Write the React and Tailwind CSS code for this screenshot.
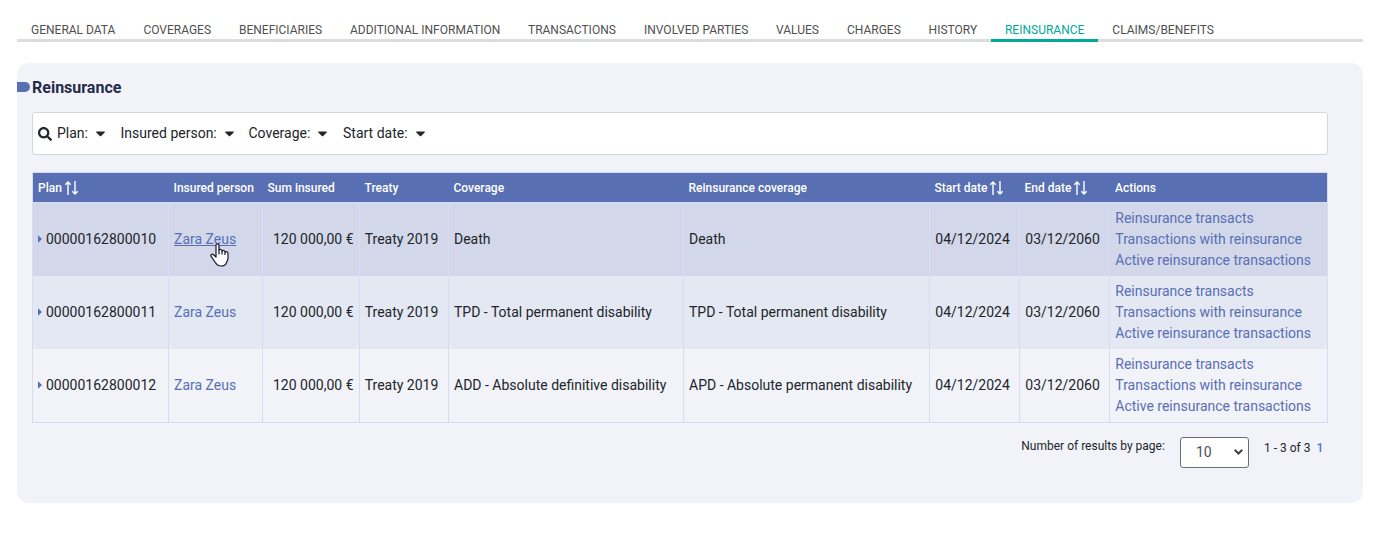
import React from "react";

const TABS = [
  { label: "GENERAL DATA", width: "w-[112.4px]" },
  { label: "COVERAGES", width: "w-[95.6px]" },
  { label: "BENEFICIARIES", width: "w-[111px]" },
  { label: "ADDITIONAL INFORMATION", width: "w-[178px]" },
  { label: "TRANSACTIONS", width: "w-[116px]" },
  { label: "INVOLVED PARTIES", width: "w-[132px]" },
  { label: "VALUES", width: "w-[71px]" },
  { label: "CHARGES", width: "w-[81.600px]" },
  { label: "HISTORY", width: "w-[76.4px]" },
  { label: "REINSURANCE", width: "w-[107.4px]", active: true },
  { label: "CLAIMS/BENEFITS", width: "w-[130px]" },
];

const FILTERS = [
  { label: "Plan:", width: "w-[63.5px]" },
  { label: "Insured person:", width: "w-[128px]" },
  { label: "Coverage:", width: "w-[94.5px]" },
  { label: "Start date:", width: "w-[97px]" },
];

const COLUMNS = [
  { label: "Plan", sortable: true },
  { label: "Insured person" },
  { label: "Sum insured" },
  { label: "Treaty" },
  { label: "Coverage" },
  { label: "Reinsurance coverage" },
  { label: "Start date", sortable: true },
  { label: "End date", sortable: true },
  { label: "Actions" },
];

const ROWS = [
  { plan: "00000162800010", coverage: "Death", reinsurance: "Death", bg: "bg-[#d2d8ea]", hovered: true },
  {
    plan: "00000162800011",
    coverage: "TPD - Total permanent disability",
    reinsurance: "TPD - Total permanent disability",
    bg: "bg-[#e4e8f3]",
  },
  {
    plan: "00000162800012",
    coverage: "ADD - Absolute definitive disability",
    reinsurance: "APD - Absolute permanent disability",
    bg: "bg-[#f2f3f9]",
  },
];

const ACTIONS = ["Reinsurance transacts", "Transactions with reinsurance", "Active reinsurance transactions"];

const GRID = "grid grid-cols-[136px_94px_97px_89px_235px_246px_90px_90px_217px]";

function SortIcon() {
  return (
    <svg className="mb-[2px] ml-[2px] h-[16px] w-[15px] shrink-0" viewBox="0 0 15 16" fill="none" stroke="#fff" strokeWidth="1.4">
      <path d="M4 15V2M1.300 4.700L4 2L6.700 4.700M11 1V14M8.300 11.300L11 14L13.700 11.300" />
    </svg>
  );
}

function Caret() {
  return (
    <svg className="ml-2 h-[6px] w-[9px]" viewBox="0 0 9 6" fill="#212529">
      <path d="M.8 .5H8.200C8.900 .5 9.200 1.100 8.700 1.600L5.100 5.100C4.800 5.400 4.200 5.400 3.900 5.100L.3 1.600C-.2 1.100 .1 .5 .8 .5Z" />
    </svg>
  );
}

function HandCursor() {
  return (
    <svg
      className="absolute left-[41px] top-[40px] h-[24px] w-[20px]"
      viewBox="0 0 20 24"
      fill="#fff"
      stroke="#111827"
      strokeWidth="1.2"
      strokeLinejoin="round"
      strokeLinecap="round"
    >
      <path d="M6 14V2.3C6 .3 9 .3 9 2.3V7C10 6 12 6.400 12 8C13 7 15 7.400 15 9C16 8.200 18 8.700 18 10.500V15C18 17 17 18 16.300 20C15.500 22.500 13 23 11 23C8 23 6.500 21.500 5 19L1.200 13.400C.200 11.800 2 10.500 3.500 11.700L6 14Z" />
      <path d="M9 7V11M12 8V11M15 9V11.500" />
    </svg>
  );
}

function Cell({ className = "pl-[5px]", children }) {
  return <div className={`flex items-center border-r border-[#d6dbfa] whitespace-nowrap ${className}`}>{children}</div>;
}

export default function App() {
  return (
    <div className="flex h-[533px] w-[1396px] flex-col bg-white px-[17px] pt-[20px] font-[Roboto,sans-serif] text-[14px] leading-[21px] text-[#212529]">
      <nav className="flex h-[22px] w-[1346px] shrink-0 border-b-[3px] border-[#dcdddd]">
        {TABS.map((tab) => (
          <a
            key={tab.label}
            className={`${tab.width} h-[22px] shrink-0 pl-[14px] text-[12px] leading-[20px] whitespace-nowrap ${
              tab.active ? "border-b-[3px] border-[#00a99a] text-[#00a99a]" : "text-[#4f4f4f]"
            }`}
          >
            {tab.label}
          </a>
        ))}
      </nav>

      <section className="mt-[21px] flex h-[440px] w-[1346px] flex-col rounded-[12px] bg-[#f2f3f9]">
        <div className="mt-[14px] flex h-[21px] items-start">
          <span className="mt-[5px] h-[10px] w-[13px] rounded-r-[5px] bg-[#586fb4]" />
          <h2 className="ml-[2px] text-[16px] font-bold text-[#252b4b]">Reinsurance</h2>
        </div>

        <div className="mt-[14px] ml-[15px] flex h-[43px] w-[1296px] shrink-0 items-center rounded-[3px] border border-[#d5d6d9] bg-white pl-[5px]">
          <svg className="mr-[5px] h-[14px] w-[14px]" viewBox="0 0 512 512" fill="#212529">
            <path d="M505 442.700L405.300 343c-4.500-4.500-10.600-7-17-7H372c27.600-35.300 44-79.700 44-128C416 93.100 322.900 0 208 0S0 93.100 0 208s93.100 208 208 208c48.300 0 92.700-16.400 128-44v16.300c0 6.400 2.500 12.500 7 17l99.700 99.700c9.400 9.400 24.600 9.400 33.900 0l28.300-28.300c9.400-9.400 9.400-24.600.1-34zM208 336c-70.700 0-128-57.200-128-128 0-70.700 57.200-128 128-128 70.700 0 128 57.200 128 128 0 70.700-57.200 128-128 128z" />
          </svg>
          {FILTERS.map((filter) => (
            <div key={filter.label} className={`${filter.width} flex shrink-0 items-center whitespace-nowrap`}>
              {filter.label}
              <Caret />
            </div>
          ))}
        </div>

        <div className="mt-[17px] ml-[15px] w-[1296px] shrink-0 border border-[#d6dbfa]">
          <div className={`${GRID} h-[30px] border-b border-[#d6dbfa] bg-[#586fb4] text-[12px] font-medium text-white`}>
            {COLUMNS.map((column) => (
              <div key={column.label} className="flex items-center pt-[2px] pl-[4.5px] whitespace-nowrap first:pl-[5px] last:pl-[5px]">
                {column.label}
                {column.sortable && <SortIcon />}
              </div>
            ))}
          </div>
          {ROWS.map((row) => (
            <div key={row.plan} className={`${GRID} ${row.bg} h-[73px]`}>
              <Cell>
                <svg className="mr-[4px] mb-px h-[8px] w-[4px]" viewBox="0 0 4 8" fill="#586fb4">
                  <path d="M0 .3L4 4L0 7.700Z" />
                </svg>
                {row.plan}
              </Cell>
              <Cell className="relative pl-[5px]">
                <a className={`text-[#586fb4] ${row.hovered ? "underline" : ""}`}>Zara Zeus</a>
                {row.hovered && <HandCursor />}
              </Cell>
              <Cell className="justify-end pr-[5.5px]">120 000,00 €</Cell>
              <Cell className="pl-[4.7px]">Treaty 2019</Cell>
              <Cell>{row.coverage}</Cell>
              <Cell>{row.reinsurance}</Cell>
              <Cell className="pl-[5.3px]">04/12/2024</Cell>
              <Cell className="pl-[5.3px]">03/12/2060</Cell>
              <div className="flex flex-col justify-center pl-[5.3px] whitespace-nowrap text-[#586fb4]">
                {ACTIONS.map((action) => (
                  <a key={action}>{action}</a>
                ))}
              </div>
            </div>
          ))}
        </div>

        <div className="mt-[14px] flex items-start pl-[1004.3px] text-[12px] leading-[18px] whitespace-nowrap">
          <span className="w-[158.7px]">Number of results by page:</span>
          <div className="flex h-[31px] w-[69px] items-center justify-between rounded-[3px] border border-[#6b6b7b] bg-white pr-[5px] pb-px pl-[15px] text-[14px] text-[#495057]">
            10
            <svg className="h-[6px] w-[9px]" viewBox="0 0 9 6" fill="none" stroke="#3d4248" strokeWidth="2">
              <path d="M.7 .8L4.500 4.500L8.300 .8" />
            </svg>
          </div>
          <span className="mt-[2px] ml-[15px]">1 - 3 of 3</span>
          <a className="mt-[2px] ml-[6px] font-medium text-[#4a6fdc]">1</a>
        </div>
      </section>
    </div>
  );
}
